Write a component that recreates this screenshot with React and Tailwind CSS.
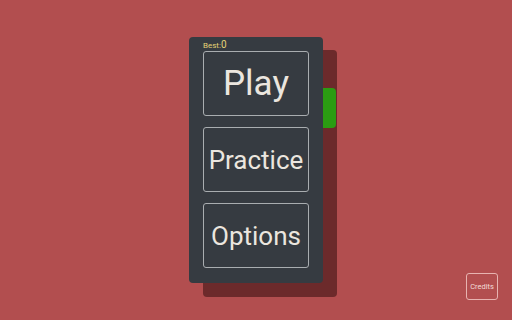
export default function App() {
  return (
    <div
      className="w-[512px] h-[320px] bg-[#b24e4f] flex items-center justify-center relative overflow-hidden"
      style={{ fontFamily: 'Roboto, "Noto Sans", sans-serif' }}
    >
      <div className="relative">
        {/* back shadow card */}
        <div className="absolute left-[14px] top-[13px] w-[134px] h-[247px] rounded-[4px] bg-[#6c2a2b]" />
        {/* green tab */}
        <div className="absolute left-[128px] top-[51px] w-[19px] h-[40px] rounded-[4px] bg-[#2b9c12]" />
        <div className="relative w-[134px] h-[246px] rounded-[4px] bg-[#363b41] px-[14px] pt-[14px] flex flex-col gap-[11px]">
          <div className="absolute left-[14px] top-[3px] text-[8px] leading-[10px] text-[#e3d275]">
            Best:<span className="text-[10px]">0</span>
          </div>
          <button className="h-[65px] w-full rounded-[3px] border border-[#a9adb0] text-[#ebe6df] text-[35px] leading-none flex items-center justify-center">
            Play
          </button>
          <button className="h-[65px] w-full rounded-[3px] border border-[#a9adb0] text-[#ebe6df] text-[26px] leading-none flex items-center justify-center">
            Practice
          </button>
          <button className="h-[65px] w-full rounded-[3px] border border-[#a9adb0] text-[#ebe6df] text-[26px] leading-none flex items-center justify-center">
            Options
          </button>
        </div>
      </div>
      <button className="absolute right-[14px] bottom-[20px] w-[32px] h-[27px] rounded-[3px] border border-[#e7b3b0] text-[#f3dcd8] text-[7.5px] flex items-center justify-center">
        Credits
      </button>
    </div>
  );
}
